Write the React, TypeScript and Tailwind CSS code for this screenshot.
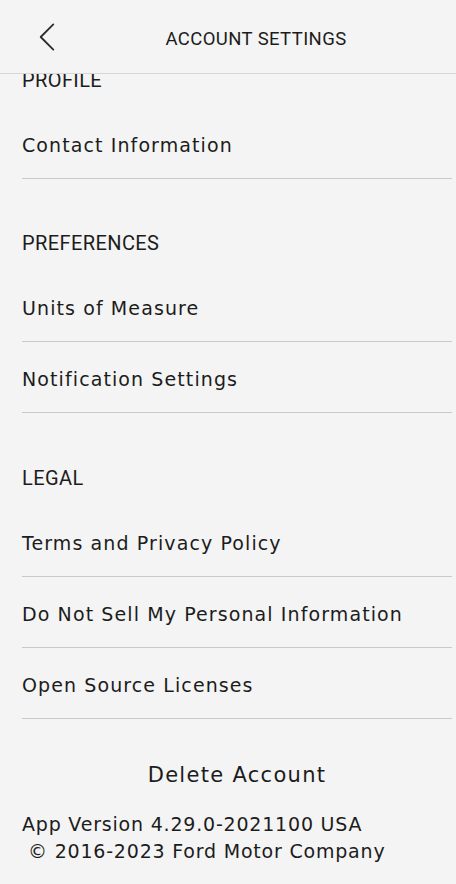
import React from "react";

interface Section {
  title: string;
  items: string[];
}

const sections: Section[] = [
  { title: "PROFILE", items: ["Contact Information"] },
  { title: "PREFERENCES", items: ["Units of Measure", "Notification Settings"] },
  {
    title: "LEGAL",
    items: [
      "Terms and Privacy Policy",
      "Do Not Sell My Personal Information",
      "Open Source Licenses",
    ],
  },
];

const body = "font-['DejaVu_Sans',sans-serif] text-[19px] tracking-[1.1px] text-[#1c1c1c]";
const caps = "font-['Roboto',sans-serif] text-[20px] tracking-[0.4px] text-[#1c1c1c]";

const BackIcon = () => (
  <svg width="20" height="32" viewBox="0 0 20 32" fill="none">
    <polyline
      points="17,2 3,16 17,30"
      stroke="#2a2a2a"
      strokeWidth="2"
      strokeLinecap="round"
      strokeLinejoin="round"
    />
  </svg>
);

export default function App() {
  return (
    <div className="w-[456px] h-[884px] bg-[#f4f4f4] flex flex-col overflow-hidden">
      <header className="h-[74px] shrink-0 flex items-center border-b border-[#d6d6d6] bg-[#f4f4f4] relative z-10">
        <button className="w-[56px] h-full flex items-center justify-end pl-[38px]">
          <BackIcon />
        </button>
        <div className="flex-1 text-center pt-[7px] font-['Roboto',sans-serif] text-[18.5px] tracking-[0.4px] text-[#1c1c1c]">
          ACCOUNT SETTINGS
        </div>
      </header>

      <div className="flex-1 overflow-hidden">
        <div className="-mt-[15px] pl-[22px] pr-[4px]">
          {sections.map((s, si) => (
            <div key={s.title}>
              <div
                className={`${si === 0 ? "h-[49px]" : si === 2 ? "h-[93px]" : "h-[92px]"} flex items-end pb-[14px]`}
              >
                <span className={`${caps} leading-[28px]`}>{s.title}</span>
              </div>
              {s.items.map((item) => (
                <div
                  key={item}
                  className="h-[71px] flex items-center pt-[5px] border-b border-[#c9c9c9]"
                >
                  <span className={body}>{item}</span>
                </div>
              ))}
            </div>
          ))}

          <div className="pt-[42px] text-center">
            <span className="font-['DejaVu_Sans',sans-serif] text-[21px] tracking-[1.3px] leading-[28px] text-[#1c1c1c]">
              Delete Account
            </span>
          </div>
          <div className="mt-[22px] font-['DejaVu_Sans',sans-serif] text-[19px] tracking-[0.8px] leading-[27px] text-[#1c1c1c]">
            <div>App Version 4.29.0-2021100 USA</div>
            <div className="pl-[6px]">© 2016-2023 Ford Motor Company</div>
          </div>
        </div>
      </div>
    </div>
  );
}
